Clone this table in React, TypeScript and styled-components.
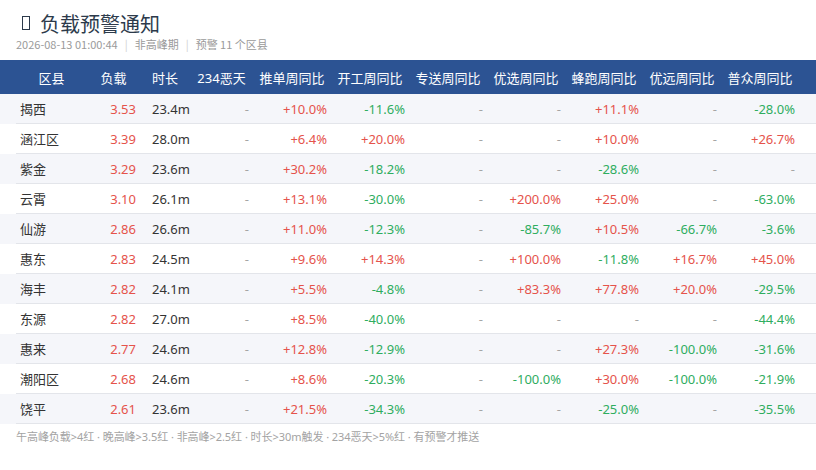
import React from 'react';
import styled, { createGlobalStyle } from 'styled-components';

const GlobalStyle = createGlobalStyle`
    html, body {
        margin: 0;
        padding: 0;
        background: #fff;
        font-family: 'Noto Sans', 'Noto Sans CJK SC', sans-serif;
    }
`;

const COLS = '71px 53px 50px 63px repeat(7, 78px)';

const Page = styled.div`
    width: 816px;
    height: 470px;
    background: #fff;
    overflow: hidden;
`;

const Head = styled.div`
    padding: 10px 16px 8px;
`;

const Title = styled.div`
    display: flex;
    align-items: center;
    gap: 10px;
    height: 26px;
    padding-left: 6px;
    color: #2c3a4b;
    font-size: 20px;
    font-family: 'Noto Sans CJK SC', sans-serif;
`;

const Tofu = styled.span`
    display: inline-block;
    width: 8px;
    height: 14px;
    border: 1.5px solid #2c3a4b;
    box-sizing: border-box;
`;

const Sub = styled.div`
    height: 16px;
    line-height: 16px;
    color: #9a9a9a;
    font-size: 11px;
    font-family: 'Noto Sans CJK SC', sans-serif;

    .sep {
        color: #cfcfcf;
        margin: 0 7px;
    }
`;

const HeaderBar = styled.div`
    background: #2c5393;
    height: 34px;
    padding-left: 16px;
`;

const Grid = styled.div`
    display: grid;
    grid-template-columns: ${COLS};
    height: 100%;
`;

const Th = styled.div`
    display: flex;
    align-items: center;
    justify-content: center;
    color: #fff;
    font-size: 13px;
    white-space: nowrap;
`;

const Row = styled.div<{ $striped: boolean }>`
    background: ${(p) => (p.$striped ? '#f5f6fa' : '#fff')};
    padding-left: 16px;
`;

const RowInner = styled.div`
    display: grid;
    grid-template-columns: ${COLS};
    height: 30px;
    box-sizing: border-box;
    border-bottom: 1px solid #e3e5ea;
`;

type Tone = 'red' | 'green' | 'dark' | 'dim';

const toneColor: Record<Tone, string> = {
    red: '#e5534b',
    green: '#2fad5f',
    dark: '#333',
    dim: '#a5a5a5',
};

const Td = styled.div<{ $align: 'left' | 'right'; $tone: Tone; $padLeft?: number }>`
    display: flex;
    align-items: center;
    justify-content: ${(p) => (p.$align === 'left' ? 'flex-start' : 'flex-end')};
    padding: 0 4px 0 ${(p) => p.$padLeft ?? 4}px;
    color: ${(p) => toneColor[p.$tone]};
    font-size: 13px;
    white-space: nowrap;
`;

const Foot = styled.div`
    padding: 5px 16px 0;
    line-height: 16px;
    color: #a3a3a3;
    font-size: 11px;
    letter-spacing: -0.05px;
`;

const headers = ['区县', '负载', '时长', '234恶天', '推单周同比', '开工周同比', '专送周同比', '优选周同比', '蜂跑周同比', '优远周同比', '普众周同比'];

// name, load, time, 234, then 7 ratios
const rows: string[][] = [
    ['揭西', '3.53', '23.4m', '-', '+10.0%', '-11.6%', '-', '-', '+11.1%', '-', '-28.0%'],
    ['涵江区', '3.39', '28.0m', '-', '+6.4%', '+20.0%', '-', '-', '+10.0%', '-', '+26.7%'],
    ['紫金', '3.29', '23.6m', '-', '+30.2%', '-18.2%', '-', '-', '-28.6%', '-', '-'],
    ['云霄', '3.10', '26.1m', '-', '+13.1%', '-30.0%', '-', '+200.0%', '+25.0%', '-', '-63.0%'],
    ['仙游', '2.86', '26.6m', '-', '+11.0%', '-12.3%', '-', '-85.7%', '+10.5%', '-66.7%', '-3.6%'],
    ['惠东', '2.83', '24.5m', '-', '+9.6%', '+14.3%', '-', '+100.0%', '-11.8%', '+16.7%', '+45.0%'],
    ['海丰', '2.82', '24.1m', '-', '+5.5%', '-4.8%', '-', '+83.3%', '+77.8%', '+20.0%', '-29.5%'],
    ['东源', '2.82', '27.0m', '-', '+8.5%', '-40.0%', '-', '-', '-', '-', '-44.4%'],
    ['惠来', '2.77', '24.6m', '-', '+12.8%', '-12.9%', '-', '-', '+27.3%', '-100.0%', '-31.6%'],
    ['潮阳区', '2.68', '24.6m', '-', '+8.6%', '-20.3%', '-', '-100.0%', '+30.0%', '-100.0%', '-21.9%'],
    ['饶平', '2.61', '23.6m', '-', '+21.5%', '-34.3%', '-', '-', '-25.0%', '-', '-35.5%'],
];

const toneOf = (v: string): Tone => {
    if (v === '-') return 'dim';
    if (v.startsWith('+')) return 'red';
    return 'green';
};

const App = () => {
    return (
        <Page>
            <GlobalStyle />
            <Head>
                <Title>
                    <Tofu />
                    <span>负载预警通知</span>
                </Title>
                <Sub>
                    2026-08-13 01:00:44<span className="sep">|</span>非高峰期<span className="sep">|</span>预警 11 个区县
                </Sub>
            </Head>
            <HeaderBar>
                <Grid>
                    {headers.map((h) => (
                        <Th key={h}>{h}</Th>
                    ))}
                </Grid>
            </HeaderBar>
            {rows.map((r, i) => (
                <Row key={r[0]} $striped={i % 2 === 0}>
                    <RowInner>
                        <Td $align="left" $tone="dark">{r[0]}</Td>
                        <Td $align="right" $tone="red">{r[1]}</Td>
                        <Td $align="left" $tone="dark" $padLeft={12}>{r[2]}</Td>
                        {r.slice(3).map((v, j) => (
                            <Td key={j} $align="right" $tone={toneOf(v)}>{v}</Td>
                        ))}
                    </RowInner>
                </Row>
            ))}
            <Foot>午高峰负载&gt;4红 · 晚高峰&gt;3.5红 · 非高峰&gt;2.5红 · 时长&gt;30m触发 · 234恶天&gt;5%红 · 有预警才推送</Foot>
        </Page>
    );
};

export default App;
